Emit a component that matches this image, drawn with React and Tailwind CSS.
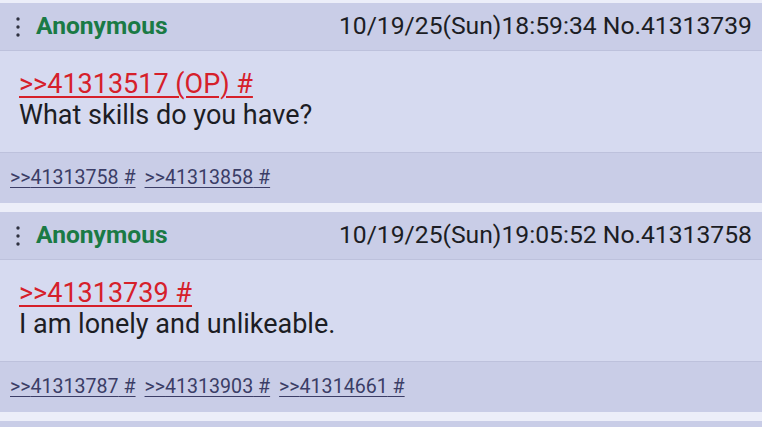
const posts = [
  {
    no: "41313739",
    time: "10/19/25(Sun)18:59:34",
    quote: ">>41313517 (OP) #",
    text: "What skills do you have?",
    replies: ["41313758", "41313858"],
  },
  {
    no: "41313758",
    time: "10/19/25(Sun)19:05:52",
    quote: ">>41313739 #",
    text: "I am lonely and unlikeable.",
    replies: ["41313787", "41313903", "41314661"],
  },
];

// vertical "more" menu dots
const MenuDots = () => (
  <svg width="6" height="22" viewBox="0 0 6 22" className="shrink-0">
    <circle cx="3" cy="3" r="1.7" fill="#2f3140" />
    <circle cx="3" cy="11" r="1.7" fill="#2f3140" />
    <circle cx="3" cy="19" r="1.7" fill="#2f3140" />
  </svg>
);

const Post = ({ post }) => {
  return (
    <div className="flex flex-col shrink-0">
      <div className="h-[48px] flex items-center justify-between bg-[#c9cde7] pl-[15px] pr-[10px] border-b border-[#bdc1dc]">
        <div className="flex items-center gap-[15px]">
          <MenuDots />
          <span className="font-bold text-[#1a7a45] text-[24.6px] leading-none">Anonymous</span>
        </div>
        <span className="text-[#1c1d24] text-[24.7px] leading-none">
          {post.time} No.{post.no}
        </span>
      </div>

      <div className="h-[101px] bg-[#d6daf0] pl-[19px] pt-[18px] text-[27px] leading-[31px]">
        <div>
          <a className="text-[#d6202a] underline decoration-[1.5px] underline-offset-[3px]">{post.quote}</a>
        </div>
        <div className="text-[#1c1d24]">{post.text}</div>
      </div>

      <div className="h-[51px] flex items-center gap-[9px] bg-[#c9cde7] pl-[10px] border-t border-[#bdc1dc] text-[19.6px]">
        {post.replies.map((r) => (
          <a key={r} className="text-[#3b3d66] underline underline-offset-[3px]">
            &gt;&gt;{r} #
          </a>
        ))}
      </div>
    </div>
  );
};

export default function App() {
  return (
    <div
      className="w-[762px] h-[427px] overflow-hidden bg-[#eceef9] pt-[3px] flex flex-col gap-[9px]"
      style={{ fontFamily: "Roboto, 'Noto Sans', sans-serif" }}
    >
      {posts.map((p) => (
        <Post key={p.no} post={p} />
      ))}
      <div className="h-[48px] bg-[#c9cde7] shrink-0" />
    </div>
  );
}
